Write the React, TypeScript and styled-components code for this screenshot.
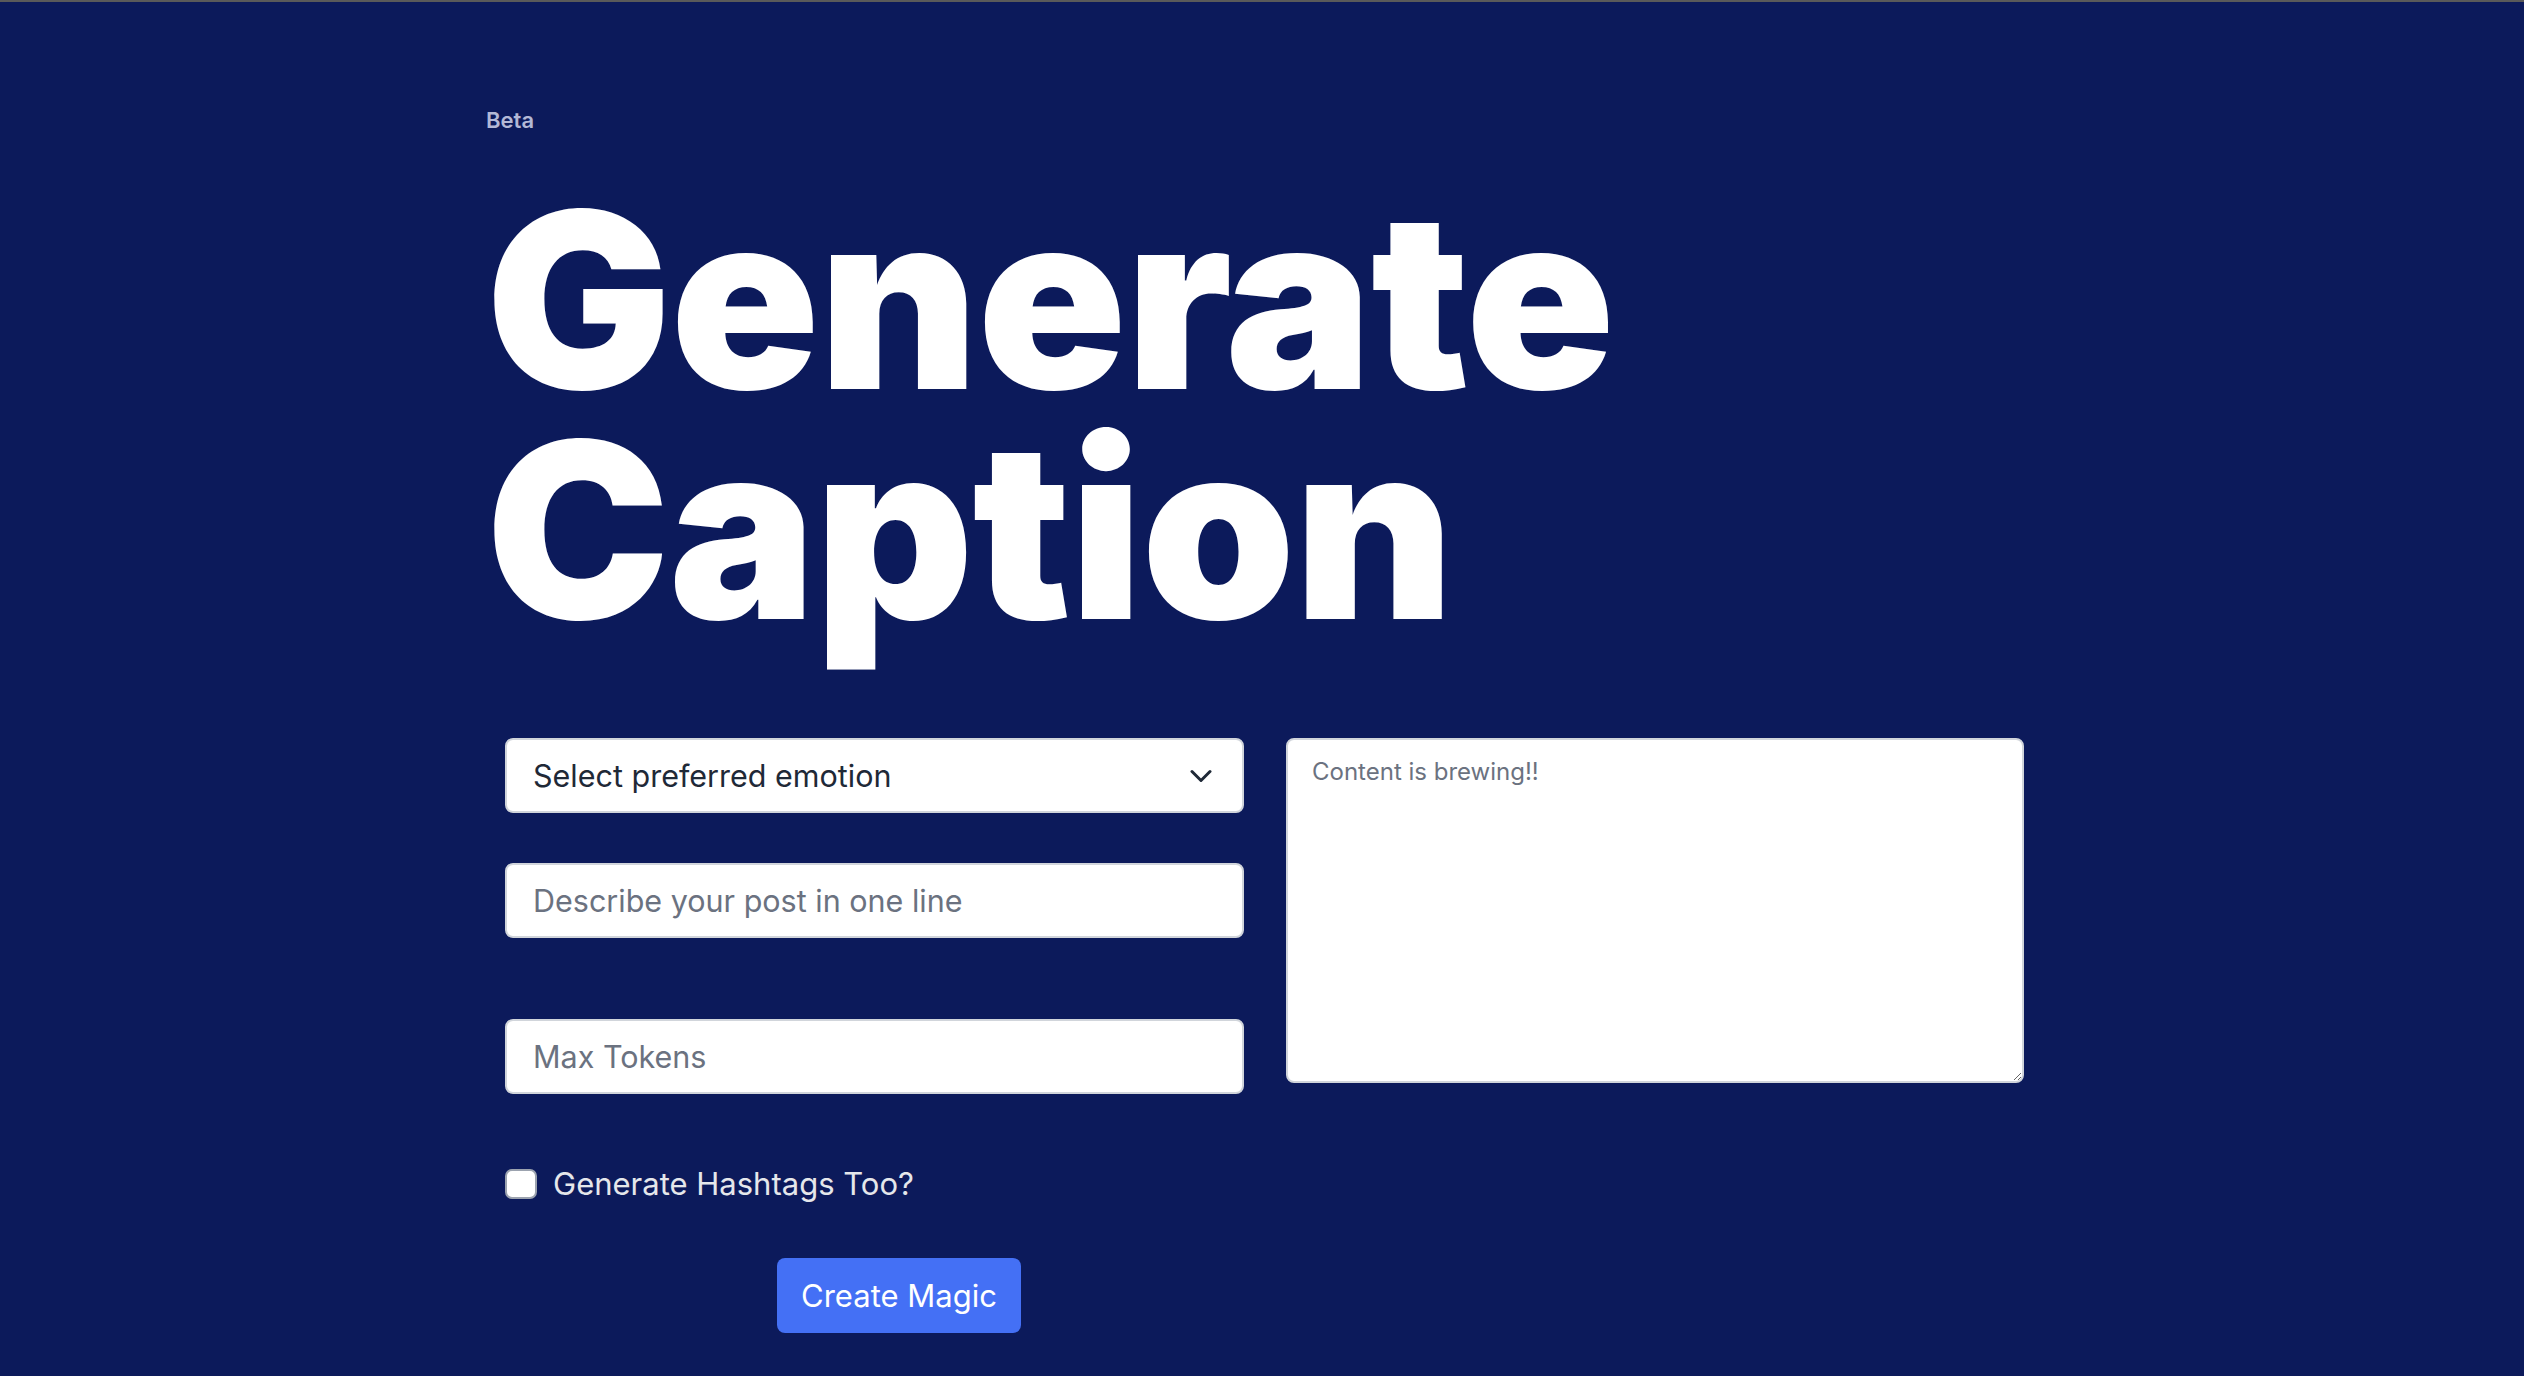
import React from "react";
import styled, { createGlobalStyle } from "styled-components";

const GlobalStyle = createGlobalStyle`
    html, body {
        margin: 0;
        padding: 0;
        background: #0c1a5b;
        font-family: Inter, "Noto Sans", sans-serif;
    }
    * {
        box-sizing: border-box;
    }
`;

const Page = styled.div`
    min-height: 1376px;
    background: #0c1a5b;
    border-top: 2px solid #5a5a5a;
`;

const Main = styled.main`
    width: 1552px;
    margin: 0 auto;
    padding-top: 104px;
`;

const Badge = styled.div`
    font-size: 22px;
    line-height: 28px;
    font-weight: 600;
    color: #b3b8d6;
`;

const Heading = styled.h1`
    margin: 51px 0 0;
    font-size: 246px;
    line-height: 230px;
    font-weight: 900;
    letter-spacing: -1px;
    color: #ffffff;
`;

const Form = styled.form`
    display: grid;
    grid-template-columns: 739px 738px;
    column-gap: 42px;
    align-items: start;
    margin: 93px 0 0 19px;
`;

const Column = styled.div`
    display: flex;
    flex-direction: column;
`;

const fieldBase = `
    width: 100%;
    height: 75px;
    background: #ffffff;
    border: 2px solid #d1d5db;
    border-radius: 8px;
    padding: 0 26px;
    font-family: Inter, "Noto Sans", sans-serif;
    font-size: 30.5px;
    color: #1f2937;
    outline: none;
`;

const SelectBox = styled.div`
    ${fieldBase}
    display: flex;
    align-items: center;
    justify-content: space-between;
    padding-right: 30px;
`;

const TextInput = styled.input<{ $gap: number }>`
    ${fieldBase}
    margin-top: ${(p) => p.$gap}px;

    &::placeholder {
        color: #6b7280;
    }
`;

const Output = styled.textarea`
    width: 738px;
    height: 345px;
    background: #ffffff;
    border: 2px solid #d1d5db;
    border-radius: 8px;
    padding: 14px 24px;
    font-family: Inter, "Noto Sans", sans-serif;
    font-size: 24px;
    line-height: 36px;
    color: #1f2937;
    outline: none;

    &::placeholder {
        color: #6b7280;
    }
`;

const CheckRow = styled.label`
    display: flex;
    align-items: center;
    gap: 16px;
    margin-top: 71px;
    font-size: 31px;
    color: #e5e7eb;
`;

const CheckBox = styled.span`
    width: 32px;
    height: 30px;
    background: #ffffff;
    border: 2px solid #9ca3af;
    border-radius: 7px;
`;

const Button = styled.button`
    align-self: flex-start;
    margin: 56px 0 0 272px;
    width: 244px;
    height: 75px;
    border: none;
    border-radius: 8px;
    background: #4470f5;
    color: #ffffff;
    font-family: Inter, "Noto Sans", sans-serif;
    font-size: 31px;
    cursor: pointer;
`;

const Chevron = () => (
    <svg width="22" height="14" viewBox="0 0 22 14" fill="none">
        <path
            d="M2 2.5l9 9 9-9"
            stroke="#1f2937"
            strokeWidth="3"
            strokeLinecap="round"
            strokeLinejoin="round"
        />
    </svg>
);

const App = () => {
    return (
        <Page>
            <GlobalStyle />
            <Main>
                <Badge>Beta</Badge>
                <Heading>
                    Generate
                    <br />
                    Caption
                </Heading>
                <Form onSubmit={(e) => e.preventDefault()}>
                    <Column>
                        <SelectBox>
                            <span>Select preferred emotion</span>
                            <Chevron />
                        </SelectBox>
                        <TextInput
                            $gap={50}
                            placeholder="Describe your post in one line"
                        />
                        <TextInput $gap={81} placeholder="Max Tokens" />
                        <CheckRow>
                            <CheckBox />
                            Generate Hashtags Too?
                        </CheckRow>
                        <Button type="submit">Create Magic</Button>
                    </Column>
                    <Output placeholder="Content is brewing!!" />
                </Form>
            </Main>
        </Page>
    );
};

export default App;
